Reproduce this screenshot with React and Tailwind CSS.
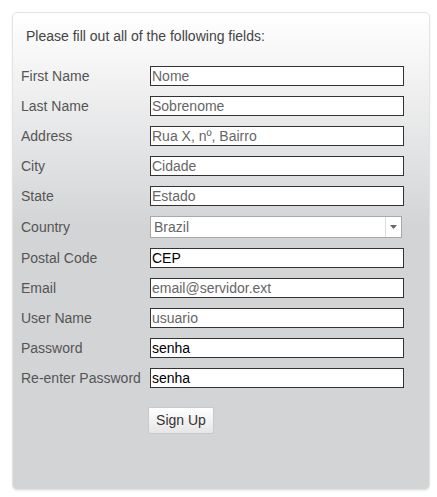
import React from "react";

const fields = [
  { label: "First Name", value: "Nome", muted: true },
  { label: "Last Name", value: "Sobrenome", muted: true },
  { label: "Address", value: "Rua X, nº, Bairro", muted: true },
  { label: "City", value: "Cidade", muted: true },
  { label: "State", value: "Estado", muted: true },
  { label: "Country", select: true, value: "Brazil" },
  { label: "Postal Code", value: "CEP" },
  { label: "Email", value: "email@servidor.ext", muted: true },
  { label: "User Name", value: "usuario", muted: true },
  { label: "Password", value: "senha" },
  { label: "Re-enter Password", value: "senha" },
];

function Field({ label, value, muted, select }) {
  return (
    <div className={`flex items-center ${select ? "h-[32px]" : "h-[30px]"}`}>
      <div className="w-[137px] shrink-0 pl-[8px] text-[14px] text-[#555] whitespace-nowrap">{label}</div>
      {select ? (
        <div className="flex h-[22px] w-[252px] items-center border border-[#a9a9a9] bg-white">
          <span className="flex-1 pl-[3px] text-[14px] text-[#666]">{value}</span>
          <span className="flex h-full w-[16px] items-center justify-center border-l border-[#ddd]">
            <svg width="7" height="4" viewBox="0 0 7 4">
              <path d="M0 0h7L3.5 4z" fill="#666" />
            </svg>
          </span>
        </div>
      ) : (
        <div
          className={`flex h-[20px] w-[254px] items-center border border-[#333] bg-white pl-[1px] text-[14px] ${
            muted ? "text-[#666]" : "text-black"
          }`}
        >
          {value}
        </div>
      )}
    </div>
  );
}

export default function App() {
  return (
    <div className="h-[497px] w-[437px] bg-white pt-[12px] pl-[12px] font-['Liberation_Sans',Arial,sans-serif]">
      <div className="h-[478px] w-[418px] rounded-[5px] border border-[#e3e3e3] bg-[linear-gradient(to_bottom,#ffffff,#d3d4d6_45%)] shadow-[0_1px_2px_rgba(0,0,0,0.08)]">
        <div className="pt-[13px] pl-[13px] text-[14px] leading-[20px] text-[#444]">
          Please fill out all of the following fields:
        </div>
        <div className="mt-[15px] flex flex-col">
          {fields.map((f) => (
            <Field key={f.label} {...f} />
          ))}
        </div>
        <div className="mt-[14px] pl-[135px]">
          <button className="h-[27px] w-[66px] rounded-[2px] border border-[#c9c9c9] bg-[linear-gradient(to_bottom,#ffffff,#e6e6e6)] text-[14px] text-[#333]">
            Sign Up
          </button>
        </div>
      </div>
    </div>
  );
}
